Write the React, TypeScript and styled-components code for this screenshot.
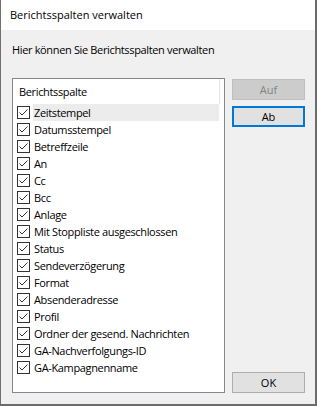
import styled, { createGlobalStyle } from "styled-components";
import { useState } from "react";

const columns = [
  "Zeitstempel",
  "Datumsstempel",
  "Betreffzeile",
  "An",
  "Cc",
  "Bcc",
  "Anlage",
  "Mit Stoppliste ausgeschlossen",
  "Status",
  "Sendeverzögerung",
  "Format",
  "Absenderadresse",
  "Profil",
  "Ordner der gesend. Nachrichten",
  "GA-Nachverfolgungs-ID",
  "GA-Kampagnenname",
];

const CheckMark = () => (
  <svg width="11" height="11" viewBox="0 0 11 11">
    <polyline
      points="1.5,5.5 4,8 9.5,2.5"
      fill="none"
      stroke="#333"
      strokeWidth="1"
    />
  </svg>
);

const App = () => {
  const [checked, setChecked] = useState(columns.map(() => true));
  const [selected, setSelected] = useState(0);

  const toggle = (i: number) => {
    setChecked(checked.map((c, j) => (j === i ? !c : c)));
  };

  return (
    <>
      <GlobalStyle />
      <Frame>
        <TitleBar>Berichtsspalten verwalten</TitleBar>
        <Content>
          <Intro>Hier können Sie Berichtsspalten verwalten</Intro>
          <Main>
            <ListBox>
              <Header>
                <HeaderCell>Berichtsspalte</HeaderCell>
              </Header>
              {columns.map((name, i) => (
                <Row key={name} onClick={() => setSelected(i)}>
                  <Box onClick={() => toggle(i)}>
                    {checked[i] && <CheckMark />}
                  </Box>
                  <Label $selected={selected === i}>{name}</Label>
                </Row>
              ))}
            </ListBox>
            <Buttons>
              <Button disabled>Auf</Button>
              <Button $focused>Ab</Button>
              <Button className="ok">OK</Button>
            </Buttons>
          </Main>
        </Content>
      </Frame>
    </>
  );
};

const GlobalStyle = createGlobalStyle`
  body {
    margin: 0;
    font-family: "Open Sans", "Liberation Sans", sans-serif;
    font-size: 11px;
    color: #000;
  }
`;

const Frame = styled.div`
  width: 317px;
  height: 406px;
  box-sizing: border-box;
  border-left: 1px solid #707070;
  border-right: 2px solid #6b6b6b;
  border-bottom: 2px solid #6b6b6b;
  background: #f0f0f0;
  display: flex;
  flex-direction: column;
`;

const TitleBar = styled.div`
  height: 30px;
  flex-shrink: 0;
  background: #fff;
  padding-left: 9px;
  display: flex;
  align-items: center;
  padding-bottom: 1px;
  box-sizing: border-box;
`;

const Content = styled.div`
  padding: 0 10px 0 11px;
  display: flex;
  flex-direction: column;
  letter-spacing: -0.35px;
`;

const Intro = styled.div`
  height: 16px;
  line-height: 16px;
  margin-top: 12px;
`;

const Main = styled.div`
  display: flex;
  gap: 7px;
  margin-top: 20px;
`;

const ListBox = styled.div`
  width: 213px;
  height: 315px;
  box-sizing: border-box;
  border: 1px solid #828790;
  background: #fff;
  display: flex;
  flex-direction: column;
`;

const Header = styled.div`
  height: 25px;
  flex-shrink: 0;
  display: flex;
`;

const HeaderCell = styled.div`
  width: 207px;
  box-sizing: border-box;
  border-right: 1px solid #e5e5e5;
  padding-left: 6px;
  display: flex;
  align-items: center;
`;

const Row = styled.div`
  height: 17px;
  display: flex;
  align-items: center;
  flex-shrink: 0;
`;

const Box = styled.div`
  width: 13px;
  height: 13px;
  box-sizing: border-box;
  border: 1px solid #333;
  margin-left: 4px;
  margin-right: 3px;
  display: flex;
  align-items: center;
  justify-content: center;
`;

const Label = styled.div<{ $selected?: boolean }>`
  width: 186px;
  height: 17px;
  line-height: 17px;
  padding-left: 1px;
  box-sizing: border-box;
  background: ${(p) => (p.$selected ? "#ececec" : "transparent")};
  white-space: nowrap;
`;

const Buttons = styled.div`
  width: 73px;
  padding-top: 1px;
  display: flex;
  flex-direction: column;
  gap: 6px;

  .ok {
    margin-top: auto;
  }
`;

const Button = styled.button<{ $focused?: boolean }>`
  width: 73px;
  height: 21px;
  box-sizing: border-box;
  font: inherit;
  letter-spacing: 0;
  color: #000;
  background: #e1e1e1;
  border: ${(p) => (p.$focused ? "2px solid #0078d7" : "1px solid #adadad")};
  padding: 0;

  &:disabled {
    background: #cccccc;
    border-color: #bfbfbf;
    color: #838383;
  }
`;

export default App;
